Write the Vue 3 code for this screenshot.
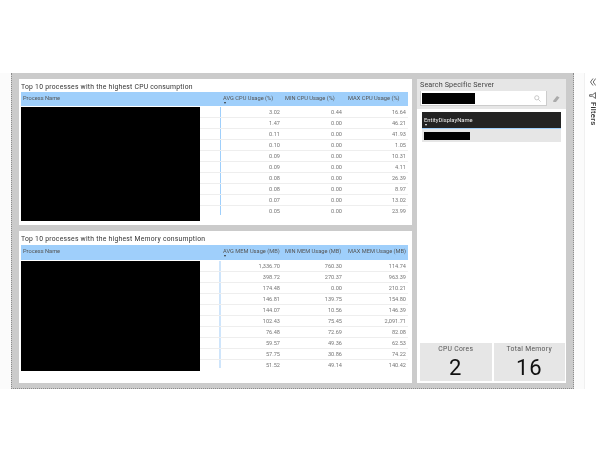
<script setup>
const cpuRows = [
  ['3.02', '0.44', '16.64'], ['1.47', '0.00', '46.21'], ['0.11', '0.00', '41.93'],
  ['0.10', '0.00', '1.05'], ['0.09', '0.00', '10.31'], ['0.09', '0.00', '4.11'],
  ['0.08', '0.00', '26.39'], ['0.08', '0.00', '8.97'], ['0.07', '0.00', '13.02'],
  ['0.05', '0.00', '23.99']
]
const memRows = [
  ['1,336.70', '760.30', '114.74'], ['398.72', '270.37', '963.39'], ['174.48', '0.00', '210.21'],
  ['146.81', '139.75', '154.80'], ['144.07', '10.56', '146.39'], ['102.43', '75.45', '2,091.71'],
  ['76.48', '72.69', '82.08'], ['59.57', '49.36', '62.53'], ['57.75', '30.86', '74.22'],
  ['51.52', '49.14', '140.42']
]
const tables = [
  { title: 'Top 10 processes with the highest CPU consumption', cols: ['AVG CPU Usage (%)', 'MIN CPU Usage (%)', 'MAX CPU Usage (%)'], rows: cpuRows, cls: 'cpu' },
  { title: 'Top 10 processes with the highest Memory consumption', cols: ['AVG MEM Usage (MB)', 'MIN MEM Usage (MB)', 'MAX MEM Usage (MB)'], rows: memRows, cls: 'mem' }
]
</script>

<template>
  <div class="page">
    <div class="side"></div>
    <div class="canvas">
      <div class="left">
        <section v-for="t in tables" :key="t.cls" class="card" :class="t.cls">
          <h2 class="title">{{ t.title }}</h2>
          <div class="head">
            <div class="name">Process Name</div>
            <div v-for="(c, i) in t.cols" :key="c" class="col">
              {{ c }}
              <span v-if="i === 0" class="sort"></span>
            </div>
          </div>
          <div class="body">
            <div class="hidden"></div>
            <div class="rows">
              <div v-for="(r, i) in t.rows" :key="i" class="row">
                <div v-for="(v, j) in r" :key="j" class="cell">{{ v }}</div>
              </div>
            </div>
          </div>
        </section>
      </div>
      <aside class="right">
        <div class="search-box">
          <div class="search-title">Search Specific Server</div>
          <div class="search-line">
            <div class="search">
              <div class="search-hidden"></div>
              <svg width="7" height="7" viewBox="0 0 8 8" class="glass">
                <circle cx="3.2" cy="3.2" r="2.4" fill="none" stroke="#bbb" stroke-width="0.9" />
                <path d="M5 5 L7.5 7.5" stroke="#bbb" stroke-width="0.9" />
              </svg>
            </div>
            <svg width="8" height="8" viewBox="0 0 8 8" class="eraser">
              <path d="M1 6 L5 1 L7.5 2.5 L4 7 L1.5 7 Z" fill="#aaa" />
            </svg>
          </div>
        </div>
        <div class="slicer">
          <div class="slicer-head">
            EntityDisplayName
            <span class="sort white"></span>
          </div>
          <div class="slicer-row"><div class="slicer-hidden"></div></div>
        </div>
        <div class="kpis">
          <div class="kpi">
            <div class="kpi-label">CPU Cores</div>
            <div class="kpi-value">2</div>
          </div>
          <div class="kpi">
            <div class="kpi-label">Total Memory</div>
            <div class="kpi-value">16</div>
          </div>
        </div>
      </aside>
    </div>
    <div class="gap"></div>
    <div class="filters">
      <svg width="6" height="8" viewBox="0 0 6 8" class="chev">
        <path d="M3 0.5 L0.5 4 L3 7.5 M5.7 0.5 L3.2 4 L5.7 7.5" fill="none" stroke="#444" stroke-width="0.8" />
      </svg>
      <svg width="7" height="7" viewBox="0 0 8 8" class="funnel">
        <path d="M7.4 0.6 V7.4 L4.2 4.9 H0.7 V3.1 H4.2 Z" fill="none" stroke="#444" stroke-width="0.9" />
      </svg>
      <span class="filter-label">Filters</span>
    </div>
  </div>
</template>

<style scoped>
.page {
  width: 600px;
  height: 463px;
  padding-top: 73px;
  box-sizing: border-box;
  display: flex;
  align-items: flex-start;
  background: #fff;
  font-family: "Roboto", "Liberation Sans", sans-serif;
  overflow: hidden;
  filter: blur(0.3px);
}
.side {
  width: 11px;
  height: 316px;
  background: #fbfbfb;
  flex: none;
}
.canvas {
  width: 563px;
  height: 316px;
  flex: none;
  box-sizing: border-box;
  background: #cbcbcb;
  border-left: 1px dotted #8c8c8c;
  border-right: 1px dotted #8c8c8c;
  border-bottom: 1px dotted #8c8c8c;
  padding: 6px 7px 5px 7px;
  display: flex;
  gap: 5px;
}
.left {
  width: 393px;
  flex: none;
  display: flex;
  flex-direction: column;
  gap: 6px;
}
.card {
  background: #fff;
  padding: 0 4px 0 2px;
  box-sizing: border-box;
}
.card.cpu { height: 146px; }
.card.mem { height: 152px; }
.title {
  margin: 0;
  height: 10px;
  padding: 3px 0 0 0;
  box-sizing: content-box;
  font-size: 6.8px;
  line-height: 11px;
  font-weight: 400;
  letter-spacing: 0.25px;
  color: #333;
  white-space: nowrap;
}
.mem .title { height: 11px; }
.head {
  display: grid;
  grid-template-columns: 200px 62px 63px 62px;
  height: 14px;
  background: #9fcffb;
  font-size: 5.7px;
  line-height: 10px;
  color: #555;
  white-space: nowrap;
}
.mem .head { height: 15px; }
.name { padding: 1px 0 0 2px; }
.col { padding: 1px 0 0 2px; position: relative; }
.sort {
  position: absolute;
  left: 3px;
  top: 10px;
  width: 0;
  height: 0;
  border-left: 1.5px solid transparent;
  border-right: 1.5px solid transparent;
  border-top: 2px solid #333;
}
.sort.white { border-top-color: #fff; left: 3px; top: 12px; }
.body {
  display: flex;
  height: 115px;
  padding-top: 1px;
  box-sizing: border-box;
}
.mem .body { height: 111px; }
.hidden {
  width: 179px;
  height: 114px;
  background: #000;
  flex: none;
}
.mem .hidden { height: 110px; }
.rows {
  width: 208px;
  flex: none;
  display: flex;
  flex-direction: column;
  background: linear-gradient(#9fcffb, #9fcffb) 20px 0 / 1px 108px no-repeat;
}
.mem .rows {
  background: linear-gradient(#cfe5fb, #cfe5fb) 19px 0 / 2px 107px no-repeat;
}
.row {
  display: grid;
  grid-template-columns: 20px 60px 62px 64px;
  height: 11px;
  box-sizing: border-box;
  border-bottom: 1px solid #eeeeee;
  font-size: 5.6px;
  line-height: 10px;
  color: #777;
}
.row:last-child { border-bottom: none; }
.cell { text-align: right; }
.cell:first-child { grid-column: 2; }
.right {
  width: 149px;
  flex: none;
  height: 304px;
  background: #fff;
  display: flex;
  flex-direction: column;
}
.search-box {
  background: #e6e6e6;
  height: 30px;
  flex: none;
  padding: 1px 0 0 3px;
  box-sizing: border-box;
}
.search-title {
  font-size: 7.2px;
  line-height: 10px;
  letter-spacing: 0.12px;
  color: #444;
}
.search-line {
  display: flex;
  align-items: center;
  gap: 5px;
  margin-top: 1px;
}
.search {
  width: 127px;
  height: 15px;
  background: #fff;
  border: 1px solid #ccc;
  border-top: none;
  box-sizing: border-box;
  display: flex;
  align-items: center;
  justify-content: space-between;
  padding-right: 5px;
  padding-left: 1px;
}
.search-hidden {
  width: 53px;
  height: 11px;
  background: #000;
}
.slicer {
  margin: 3px 5px 0 5px;
  flex: none;
}
.slicer-head {
  height: 17px;
  background: #232323;
  color: #eee;
  font-size: 5.8px;
  line-height: 10px;
  padding: 3px 0 0 2px;
  box-sizing: border-box;
  position: relative;
  border-bottom: 1px solid #9fcffb;
}
.slicer-row {
  height: 13px;
  background: #e6e6e6;
  padding: 3px 0 0 2px;
  box-sizing: border-box;
}
.slicer-hidden {
  width: 46px;
  height: 8px;
  background: #000;
}
.kpis {
  margin-top: auto;
  display: flex;
  gap: 2px;
  padding: 0 1px 2px 3px;
}
.kpi {
  width: 71.5px;
  height: 38px;
  background: #e6e6e6;
  text-align: center;
}
.kpi-label {
  font-size: 6.8px;
  line-height: 10px;
  letter-spacing: 0.3px;
  color: #555;
  padding-top: 1px;
}
.kpi-value {
  font-size: 22px;
  line-height: 27px;
  letter-spacing: 1px;
  color: #111;
}
.gap {
  width: 10px;
  height: 316px;
  background: #fbfbfb;
  flex: none;
}
.filters {
  flex: 1;
  height: 316px;
  border-left: 1px solid #f0f0f0;
  display: flex;
  flex-direction: column;
  align-items: center;
  padding-top: 5px;
  box-sizing: border-box;
}
.funnel { margin-top: 6px; }
.filter-label {
  margin-top: 3px;
  writing-mode: vertical-rl;
  font-size: 7.8px;
  font-weight: 500;
  letter-spacing: 0.25px;
  color: #333;
  line-height: 8px;
}
</style>
